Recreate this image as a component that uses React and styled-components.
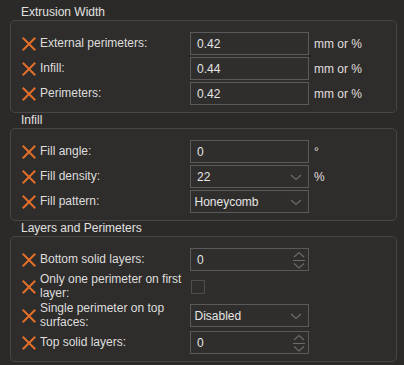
import React from 'react'
import styled, { createGlobalStyle } from 'styled-components'

const GlobalStyle = createGlobalStyle`
  html, body {
    margin: 0;
    padding: 0;
    background: #2b2a29;
  }
  body {
    font-family: 'Liberation Sans', Arial, sans-serif;
    font-size: 12px;
    color: #dedddc;
  }
`

const Page = styled.div`
  width: 404px;
  height: 365px;
  box-sizing: border-box;
  padding: 5px 7px 0 9.5px;
  display: flex;
  flex-direction: column;
`
const Section = styled.section`
  display: flex;
  flex-direction: column;
`
const SectionTitle = styled.div`
  padding-left: 11.5px;
  height: 15px;
  line-height: 15px;
  font-size: 12px;
  color: #e2e1e0;
`
const Panel = styled.div`
  border: 1px solid #474644;
  border-radius: 5px;
  background: #2e2d2c;
  padding: 11px 11px 7px 11px;
  display: flex;
  flex-direction: column;
  gap: 2px;
`
const Row = styled.div`
  display: flex;
  align-items: center;
  min-height: 23px;
`
const Mark = styled.svg`
  flex: none;
  width: 14px;
  height: 14px;
  margin-right: 4.5px;
`
const Label = styled.div`
  width: 150px;
  flex: none;
  box-sizing: border-box;
  padding-right: 1px;
  line-height: 13.5px;
`
const Field = styled.div`
  position: relative;
  flex: none;
  width: 119px;
  height: 23px;
  box-sizing: border-box;
  border: 1px solid #5b5a58;
  background: #2f2e2d;
  display: flex;
  align-items: center;
  padding-left: ${p => (p.$select ? '3.5px' : '6px')};
  color: #e6e5e4;
`
const Check = styled.div`
  width: 14px;
  height: 14px;
  margin-left: 1px;
  box-sizing: border-box;
  border: 1px solid #4f4e4c;
  background: #2f2e2d;
`
const Unit = styled.span`
  margin-left: 5px;
  color: #e0dfde;
`
const Chevron = styled.svg`
  position: absolute;
  right: 6px;
  top: 8px;
`
const Spinner = styled.svg`
  position: absolute;
  right: 2px;
  top: 2px;
`

const XMark = () => (
  <Mark viewBox='0 0 14 14'>
    <path d='M1.5 1.5 L12.5 12.5 M12.5 1.5 L1.5 12.5' stroke='#e36f2b' strokeWidth='2' strokeLinecap='square' fill='none' />
  </Mark>
)

const Down = () => (
  <Chevron width='12' height='7' viewBox='0 0 12 7'>
    <path d='M1 1 L6 5.5 L11 1' stroke='#6c6b69' strokeWidth='1.2' fill='none' />
  </Chevron>
)

const Spin = () => (
  <Spinner width='14' height='18' viewBox='0 0 14 18'>
    <path d='M2 6 L7 1.5 L12 6' stroke='#6c6b69' strokeWidth='1.1' fill='none' />
    <path d='M1 9.5 H13' stroke='#6c6b69' strokeWidth='1' />
    <path d='M2 12.5 L7 17 L12 12.5' stroke='#6c6b69' strokeWidth='1.1' fill='none' />
  </Spinner>
)

const Control = ({ type, value }) => {
  if (type === 'check') return <Check />
  return (
    <Field $select={type === 'select'}>
      {value}
      {(type === 'combo' || type === 'select') && <Down />}
      {type === 'spin' && <Spin />}
    </Field>
  )
}

const sections = [
  {
    title: 'Extrusion Width',
    rows: [
      { label: 'External perimeters:', value: '0.42', unit: 'mm or %' },
      { label: 'Infill:', value: '0.44', unit: 'mm or %' },
      { label: 'Perimeters:', value: '0.42', unit: 'mm or %' }
    ]
  },
  {
    title: 'Infill',
    rows: [
      { label: 'Fill angle:', value: '0', unit: '°' },
      { label: 'Fill density:', value: '22', unit: '%', type: 'combo' },
      { label: 'Fill pattern:', value: 'Honeycomb', type: 'select' }
    ]
  },
  {
    title: 'Layers and Perimeters',
    rows: [
      { label: 'Bottom solid layers:', value: '0', type: 'spin' },
      { label: 'Only one perimeter on first layer:', type: 'check' },
      { label: 'Single perimeter on top surfaces:', value: 'Disabled', type: 'select' },
      { label: 'Top solid layers:', value: '0', type: 'spin' }
    ]
  }
]

export default function App () {
  return (
    <>
      <GlobalStyle />
      <Page>
        {sections.map(section => (
          <Section key={section.title}>
            <SectionTitle>{section.title}</SectionTitle>
            <Panel>
              {section.rows.map(row => (
                <Row key={row.label}>
                  <XMark />
                  <Label>{row.label}</Label>
                  <Control type={row.type} value={row.value} />
                  {row.unit && <Unit>{row.unit}</Unit>}
                </Row>
              ))}
            </Panel>
          </Section>
        ))}
      </Page>
    </>
  )
}
